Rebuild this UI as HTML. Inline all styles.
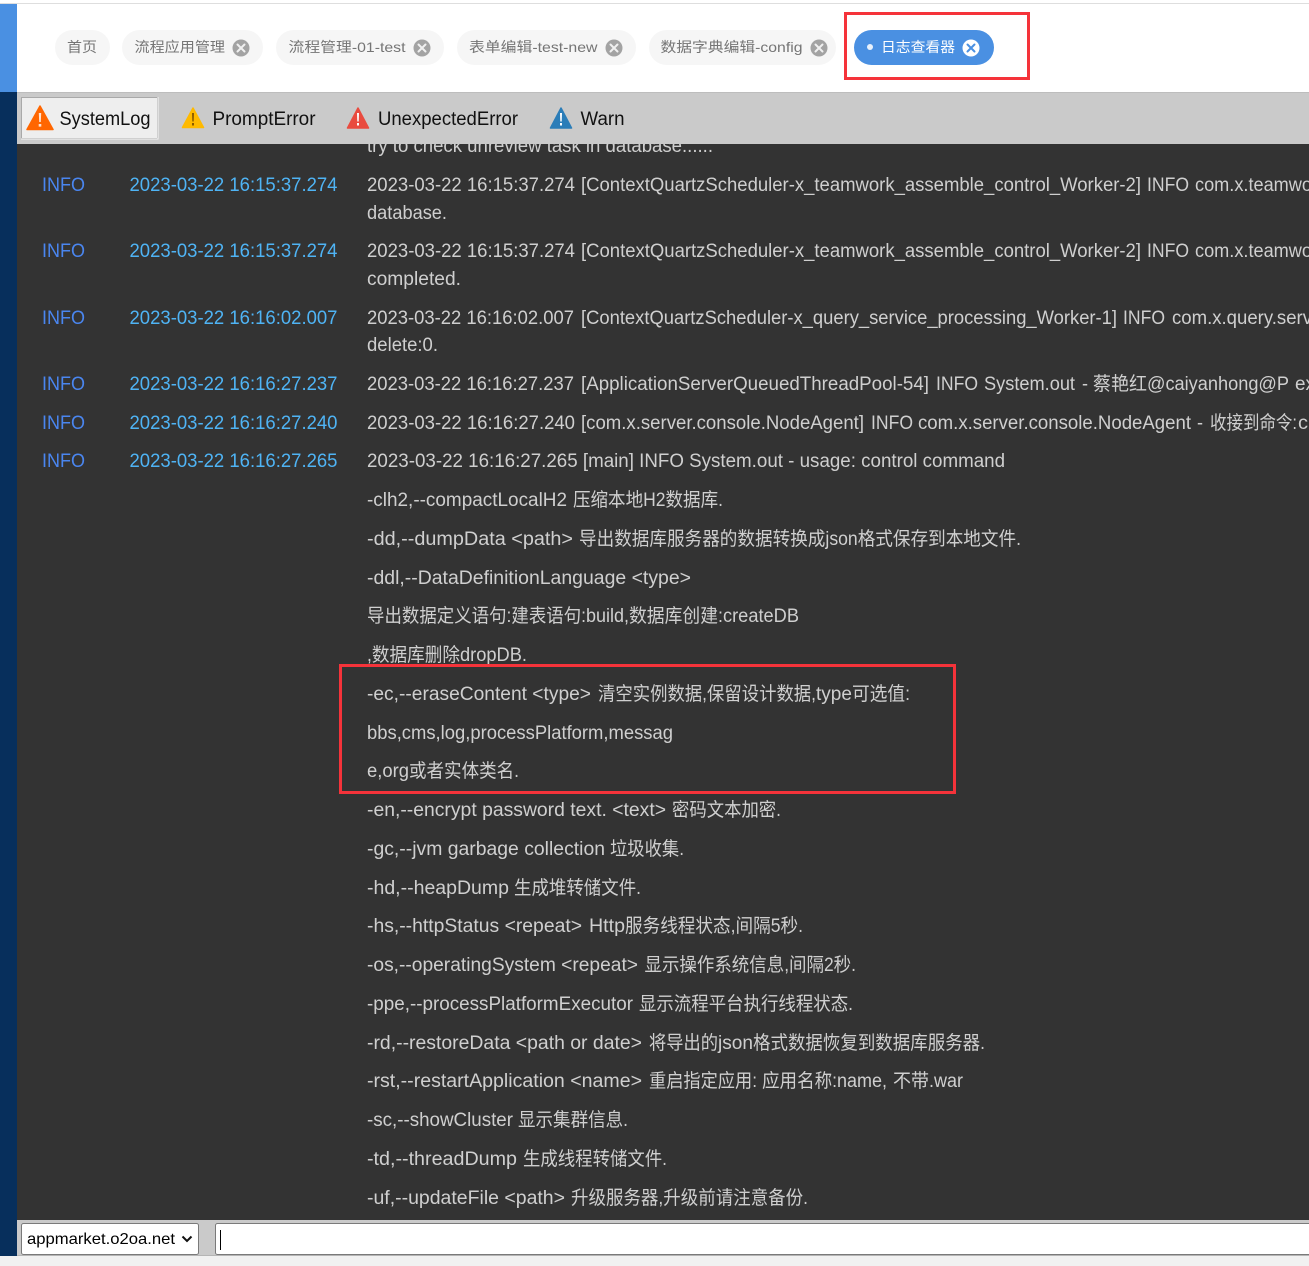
<!DOCTYPE html>
<html><head><meta charset="utf-8"><style>
html,body{margin:0;padding:0;background:#fff;overflow:hidden}
svg{display:block}
text{font-family:"Liberation Sans","Noto Sans CJK SC",sans-serif}
.t{font-size:19px;fill:#cfcfcf}
.i{font-size:19px;fill:#4a86f0}
.d{font-size:19px;fill:#4fb4f5}
.tab{font-size:14px;fill:#757575}
.tb{font-size:19px;fill:#111}
</style></head><body>
<svg width="1309" height="1266" viewBox="0 0 1309 1266" xmlns="http://www.w3.org/2000/svg">
<rect width="1309" height="1266" fill="#fff"/>
<rect y="3" width="1309" height="1" fill="#dedede"/>
<rect y="4" width="17" height="88" fill="#4a90e2"/>
<rect y="92" width="17" height="1164" fill="#072f5c"/>
<rect x="17" y="92" width="1292" height="52" fill="#cacaca"/>
<rect x="17" y="92" width="1292" height="1" fill="#bdbdbd"/>
<rect x="17" y="144" width="1292" height="1076" fill="#333333"/>
<rect x="17" y="1220" width="1292" height="36" fill="#cacaca"/>
<rect y="1256" width="1309" height="10" fill="#f1f1f1"/>
<rect y="1255" x="17" width="1292" height="1" fill="#b5b5b5"/>

<!-- tabs -->
<g fill="#f6f6f6">
<rect x="55" y="30" width="55" height="35" rx="17.5"/>
<rect x="122" y="30" width="141" height="35" rx="17.5"/>
<rect x="276" y="30" width="168" height="35" rx="17.5"/>
<rect x="457" y="30" width="179" height="35" rx="17.5"/>
<rect x="649" y="30" width="187" height="35" rx="17.5"/>
</g>
<rect x="854" y="30" width="140" height="35" rx="17.5" fill="#4a90e2"/>
<text class="tab" x="67" y="52" textLength="30" lengthAdjust="spacingAndGlyphs">首页</text>
<text class="tab" x="134.500" y="52" textLength="90.500" lengthAdjust="spacingAndGlyphs">流程应用管理</text>
<text class="tab" x="288.500" y="52" textLength="117" lengthAdjust="spacingAndGlyphs">流程管理-01-test</text>
<text class="tab" x="469" y="52" textLength="128.500" lengthAdjust="spacingAndGlyphs">表单编辑-test-new</text>
<text class="tab" x="660.500" y="52" textLength="142" lengthAdjust="spacingAndGlyphs">数据字典编辑-config</text>
<text class="tab" style="fill:#fff" x="881" y="52" textLength="74" lengthAdjust="spacingAndGlyphs">日志查看器</text>
<circle cx="870" cy="47" r="3" fill="#e8f1fc"/>
<g stroke-width="2" stroke-linecap="round">
<g><circle cx="241" cy="48" r="8.500" fill="#a3a3a3"/><path d="M237.500 44.500l7 7m0-7l-7 7" stroke="#f0f0f0"/></g>
<g><circle cx="422" cy="48" r="8.500" fill="#a3a3a3"/><path d="M418.500 44.500l7 7m0-7l-7 7" stroke="#f0f0f0"/></g>
<g><circle cx="614" cy="48" r="8.500" fill="#a3a3a3"/><path d="M610.500 44.500l7 7m0-7l-7 7" stroke="#f0f0f0"/></g>
<g><circle cx="819" cy="48" r="8.500" fill="#a3a3a3"/><path d="M815.500 44.500l7 7m0-7l-7 7" stroke="#f0f0f0"/></g>
<g><circle cx="971" cy="48" r="8.500" fill="#fff"/><path d="M967.500 44.500l7 7m0-7l-7 7" stroke="#4a90e2"/></g>
</g>
<rect x="845.500" y="13.500" width="183" height="65" fill="none" stroke="#f5333a" stroke-width="3"/>

<!-- toolbar -->
<rect x="21.500" y="97.500" width="136" height="41" fill="#eeeeee" stroke="#a9a9a9"/>
<path d="M158 97v42H21" fill="none" stroke="#f6f6f6"/>
<path d="M40 106l13 23.500H27z" fill="#ff6600" stroke="#ff6600" stroke-width="1.500" stroke-linejoin="round"/>
<path d="M38.800 113h2.400l-.4 9h-1.600zM38.700 124h2.600v2.600h-2.600z" fill="#ffe3d0"/>
<path d="M193 108l10.500 19.500H182.500z" fill="#ffba00" stroke="#ffba00" stroke-width="1.500" stroke-linejoin="round"/>
<path d="M192 113h2l-.3 8.500h-1.400zM192 123h2v2.500h-2z" fill="#8a5a00"/>
<path d="M358 108l10.500 20H347.500z" fill="#e94b3f" stroke="#e94b3f" stroke-width="1.500" stroke-linejoin="round"/>
<path d="M357 113h2l-.3 8.500h-1.400zM357 123h2v2.500h-2z" fill="#fff"/>
<path d="M561 108l10.500 20H550.500z" fill="#2b7db8" stroke="#2b7db8" stroke-width="1.500" stroke-linejoin="round"/>
<path d="M560 113h2l-.3 8.500h-1.400zM560 123h2v2.500h-2z" fill="#fff"/>
<text class="tb" x="59.500" y="125" textLength="91" lengthAdjust="spacingAndGlyphs">SystemLog</text>
<text class="tb" x="212.500" y="125" textLength="103" lengthAdjust="spacingAndGlyphs">PromptError</text>
<text class="tb" x="378" y="125" textLength="140" lengthAdjust="spacingAndGlyphs">UnexpectedError</text>
<text class="tb" x="580.500" y="125" textLength="44" lengthAdjust="spacingAndGlyphs">Warn</text>

<!-- log -->
<svg x="17" y="144" width="1292" height="1076" viewBox="17 144 1292 1076">
<text class="t" x="367" y="152" textLength="346" lengthAdjust="spacingAndGlyphs">try to check unreview task in database......</text>

<text class="i" x="42" y="191" textLength="43" lengthAdjust="spacingAndGlyphs">INFO</text>
<text class="d" x="129.500" y="191" textLength="208" lengthAdjust="spacingAndGlyphs">2023-03-22 16:15:37.274</text>
<text class="t" x="367" y="191" textLength="208" lengthAdjust="spacingAndGlyphs">2023-03-22 16:15:37.274</text>
<text class="t" x="581" y="191" textLength="560" lengthAdjust="spacingAndGlyphs">[ContextQuartzScheduler-x_teamwork_assemble_control_Worker-2]</text>
<text class="t" x="1147" y="191" textLength="42" lengthAdjust="spacingAndGlyphs">INFO</text>
<text class="t" x="1195" y="191" textLength="117" lengthAdjust="spacingAndGlyphs">com.x.teamwo</text>
<text class="t" x="367" y="219" textLength="80" lengthAdjust="spacingAndGlyphs">database.</text>

<text class="i" x="42" y="257" textLength="43" lengthAdjust="spacingAndGlyphs">INFO</text>
<text class="d" x="129.500" y="257" textLength="208" lengthAdjust="spacingAndGlyphs">2023-03-22 16:15:37.274</text>
<text class="t" x="367" y="257" textLength="208" lengthAdjust="spacingAndGlyphs">2023-03-22 16:15:37.274</text>
<text class="t" x="581" y="257" textLength="560" lengthAdjust="spacingAndGlyphs">[ContextQuartzScheduler-x_teamwork_assemble_control_Worker-2]</text>
<text class="t" x="1147" y="257" textLength="42" lengthAdjust="spacingAndGlyphs">INFO</text>
<text class="t" x="1195" y="257" textLength="117" lengthAdjust="spacingAndGlyphs">com.x.teamwo</text>
<text class="t" x="367" y="285" textLength="94" lengthAdjust="spacingAndGlyphs">completed.</text>

<text class="i" x="42" y="324" textLength="43" lengthAdjust="spacingAndGlyphs">INFO</text>
<text class="d" x="129.500" y="324" textLength="208" lengthAdjust="spacingAndGlyphs">2023-03-22 16:16:02.007</text>
<text class="t" x="367" y="324" textLength="207" lengthAdjust="spacingAndGlyphs">2023-03-22 16:16:02.007</text>
<text class="t" x="581" y="324" textLength="536" lengthAdjust="spacingAndGlyphs">[ContextQuartzScheduler-x_query_service_processing_Worker-1]</text>
<text class="t" x="1123" y="324" textLength="42" lengthAdjust="spacingAndGlyphs">INFO</text>
<text class="t" x="1172" y="324" textLength="140" lengthAdjust="spacingAndGlyphs">com.x.query.serv</text>
<text class="t" x="367" y="351" textLength="71" lengthAdjust="spacingAndGlyphs">delete:0.</text>

<text class="i" x="42" y="390" textLength="43" lengthAdjust="spacingAndGlyphs">INFO</text>
<text class="d" x="129.500" y="390" textLength="208" lengthAdjust="spacingAndGlyphs">2023-03-22 16:16:27.237</text>
<text class="t" x="367" y="390" textLength="207" lengthAdjust="spacingAndGlyphs">2023-03-22 16:16:27.237</text>
<text class="t" x="581" y="390" textLength="348" lengthAdjust="spacingAndGlyphs">[ApplicationServerQueuedThreadPool-54]</text>
<text class="t" x="936" y="390" textLength="42" lengthAdjust="spacingAndGlyphs">INFO</text>
<text class="t" x="984" y="390" textLength="91" lengthAdjust="spacingAndGlyphs">System.out</text>
<text class="t" x="1082" y="390" textLength="6" lengthAdjust="spacingAndGlyphs">-</text>
<text class="t" x="1093" y="390" textLength="54" lengthAdjust="spacingAndGlyphs">蔡艳红</text>
<text class="t" x="1147" y="390" textLength="142" lengthAdjust="spacingAndGlyphs">@caiyanhong@P</text>
<text class="t" x="1295" y="390" textLength="20" lengthAdjust="spacingAndGlyphs">ex</text>

<text class="i" x="42" y="429" textLength="43" lengthAdjust="spacingAndGlyphs">INFO</text>
<text class="d" x="129.500" y="429" textLength="208" lengthAdjust="spacingAndGlyphs">2023-03-22 16:16:27.240</text>
<text class="t" x="367" y="429" textLength="208" lengthAdjust="spacingAndGlyphs">2023-03-22 16:16:27.240</text>
<text class="t" x="581" y="429" textLength="283" lengthAdjust="spacingAndGlyphs">[com.x.server.console.NodeAgent]</text>
<text class="t" x="871" y="429" textLength="42" lengthAdjust="spacingAndGlyphs">INFO</text>
<text class="t" x="918" y="429" textLength="273" lengthAdjust="spacingAndGlyphs">com.x.server.console.NodeAgent</text>
<text class="t" x="1197" y="429" textLength="6" lengthAdjust="spacingAndGlyphs">-</text>
<text class="t" x="1210" y="429" textLength="87" lengthAdjust="spacingAndGlyphs">收接到命令:</text>
<text class="t" x="1298" y="429" textLength="10" lengthAdjust="spacingAndGlyphs">c</text>

<text class="i" x="42" y="467" textLength="43" lengthAdjust="spacingAndGlyphs">INFO</text>
<text class="d" x="129.500" y="467" textLength="208" lengthAdjust="spacingAndGlyphs">2023-03-22 16:16:27.265</text>
<text class="t" x="367" y="467" textLength="638" lengthAdjust="spacingAndGlyphs">2023-03-22 16:16:27.265 [main] INFO System.out - usage: control command</text>

<text class="t" x="367" y="506" textLength="200" lengthAdjust="spacingAndGlyphs">-clh2,--compactLocalH2</text>
<text class="t" x="573" y="506" textLength="150" lengthAdjust="spacingAndGlyphs">压缩本地H2数据库.</text>

<text class="t" x="367" y="545" textLength="206" lengthAdjust="spacingAndGlyphs">-dd,--dumpData &lt;path&gt;</text>
<text class="t" x="579" y="545" textLength="442" lengthAdjust="spacingAndGlyphs">导出数据库服务器的数据转换成json格式保存到本地文件.</text>

<text class="t" x="367" y="584" textLength="324" lengthAdjust="spacingAndGlyphs">-ddl,--DataDefinitionLanguage &lt;type&gt;</text>

<text class="t" x="367" y="622" textLength="219" lengthAdjust="spacingAndGlyphs">导出数据定义语句:建表语句:</text>
<text class="t" x="586" y="622" textLength="43" lengthAdjust="spacingAndGlyphs">build,</text>
<text class="t" x="629" y="622" textLength="94" lengthAdjust="spacingAndGlyphs">数据库创建:</text>
<text class="t" x="723" y="622" textLength="76" lengthAdjust="spacingAndGlyphs">createDB</text>

<text class="t" x="367" y="661" textLength="93" lengthAdjust="spacingAndGlyphs">,数据库删除</text>
<text class="t" x="460" y="661" textLength="67" lengthAdjust="spacingAndGlyphs">dropDB.</text>

<text class="t" x="367" y="700" textLength="224" lengthAdjust="spacingAndGlyphs">-ec,--eraseContent &lt;type&gt;</text>
<text class="t" x="598" y="700" textLength="218" lengthAdjust="spacingAndGlyphs">清空实例数据,保留设计数据,</text>
<text class="t" x="816" y="700" textLength="36" lengthAdjust="spacingAndGlyphs">type</text>
<text class="t" x="852" y="700" textLength="58" lengthAdjust="spacingAndGlyphs">可选值:</text>

<text class="t" x="367" y="739" textLength="306" lengthAdjust="spacingAndGlyphs">bbs,cms,log,processPlatform,messag</text>

<text class="t" x="367" y="777" textLength="42" lengthAdjust="spacingAndGlyphs">e,org</text>
<text class="t" x="409" y="777" textLength="110" lengthAdjust="spacingAndGlyphs">或者实体类名.</text>

<text class="t" x="367" y="816" textLength="299" lengthAdjust="spacingAndGlyphs">-en,--encrypt password text. &lt;text&gt;</text>
<text class="t" x="672" y="816" textLength="109" lengthAdjust="spacingAndGlyphs">密码文本加密.</text>

<text class="t" x="367" y="855" textLength="238" lengthAdjust="spacingAndGlyphs">-gc,--jvm garbage collection</text>
<text class="t" x="610" y="855" textLength="74" lengthAdjust="spacingAndGlyphs">垃圾收集.</text>

<text class="t" x="367" y="894" textLength="142" lengthAdjust="spacingAndGlyphs">-hd,--heapDump</text>
<text class="t" x="514" y="894" textLength="127" lengthAdjust="spacingAndGlyphs">生成堆转储文件.</text>

<text class="t" x="367" y="932" textLength="215" lengthAdjust="spacingAndGlyphs">-hs,--httpStatus &lt;repeat&gt;</text>
<text class="t" x="589" y="932" textLength="36" lengthAdjust="spacingAndGlyphs">Http</text>
<text class="t" x="625" y="932" textLength="178" lengthAdjust="spacingAndGlyphs">服务线程状态,间隔5秒.</text>

<text class="t" x="367" y="971" textLength="271" lengthAdjust="spacingAndGlyphs">-os,--operatingSystem &lt;repeat&gt;</text>
<text class="t" x="644.500" y="971" textLength="211.500" lengthAdjust="spacingAndGlyphs">显示操作系统信息,间隔2秒.</text>

<text class="t" x="367" y="1010" textLength="266" lengthAdjust="spacingAndGlyphs">-ppe,--processPlatformExecutor</text>
<text class="t" x="639" y="1010" textLength="214" lengthAdjust="spacingAndGlyphs">显示流程平台执行线程状态.</text>

<text class="t" x="367" y="1049" textLength="275" lengthAdjust="spacingAndGlyphs">-rd,--restoreData &lt;path or date&gt;</text>
<text class="t" x="649" y="1049" textLength="69" lengthAdjust="spacingAndGlyphs">将导出的</text>
<text class="t" x="718" y="1049" textLength="35" lengthAdjust="spacingAndGlyphs">json</text>
<text class="t" x="753" y="1049" textLength="232" lengthAdjust="spacingAndGlyphs">格式数据恢复到数据库服务器.</text>

<text class="t" x="367" y="1087" textLength="275" lengthAdjust="spacingAndGlyphs">-rst,--restartApplication &lt;name&gt;</text>
<text class="t" x="649" y="1087" textLength="108" lengthAdjust="spacingAndGlyphs">重启指定应用:</text>
<text class="t" x="762" y="1087" textLength="75" lengthAdjust="spacingAndGlyphs">应用名称:</text>
<text class="t" x="837" y="1087" textLength="50" lengthAdjust="spacingAndGlyphs">name,</text>
<text class="t" x="893" y="1087" textLength="36" lengthAdjust="spacingAndGlyphs">不带</text>
<text class="t" x="929" y="1087" textLength="34" lengthAdjust="spacingAndGlyphs">.war</text>

<text class="t" x="367" y="1126" textLength="146" lengthAdjust="spacingAndGlyphs">-sc,--showCluster</text>
<text class="t" x="518" y="1126" textLength="110" lengthAdjust="spacingAndGlyphs">显示集群信息.</text>

<text class="t" x="367" y="1165" textLength="150" lengthAdjust="spacingAndGlyphs">-td,--threadDump</text>
<text class="t" x="523" y="1165" textLength="144" lengthAdjust="spacingAndGlyphs">生成线程转储文件.</text>

<text class="t" x="367" y="1204" textLength="198" lengthAdjust="spacingAndGlyphs">-uf,--updateFile &lt;path&gt;</text>
<text class="t" x="571" y="1204" textLength="237" lengthAdjust="spacingAndGlyphs">升级服务器,升级前请注意备份.</text>
</svg>
<rect x="340.500" y="665.500" width="614" height="127" fill="none" stroke="#f5333a" stroke-width="3"/>

<!-- bottom -->
<rect x="21.500" y="1223.500" width="177" height="31" rx="2" fill="#fff" stroke="#7a7a7a"/>
<text x="27" y="1244" font-size="16" fill="#000" textLength="148" lengthAdjust="spacingAndGlyphs">appmarket.o2oa.net</text>
<path d="M182.500 1236.500l4.500 4.500 4.500-4.500" fill="none" stroke="#111" stroke-width="2"/>
<rect x="215.500" y="1223.500" width="1100" height="31" rx="2" fill="#fff" stroke="#7a7a7a"/>
<rect x="220" y="1230" width="1" height="20" fill="#000"/>
</svg>
</body></html>
